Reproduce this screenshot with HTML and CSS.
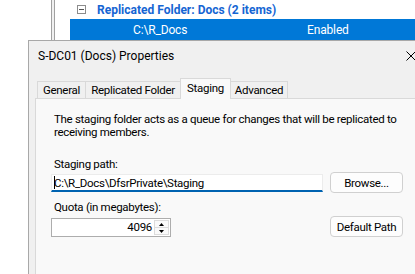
FILE: index.html
```html
<!DOCTYPE html>
<html>
<head>
<meta charset="utf-8">
<link rel="stylesheet" href="styles.css">
</head>
<body>
<div class="app">
  <div class="tree"></div>
  <div class="splitter"></div>
  <div class="list">
    <div class="group-head">
      <span class="minus-box"><span class="minus"></span></span>
      <span class="group-title">Replicated Folder: Docs (2 items)</span>
    </div>
    <div class="row selected">
      <span class="cell path">C:\R_Docs</span>
      <span class="cell state">Enabled</span>
    </div>
  </div>
</div>

<div class="dialog">
  <div class="titlebar">
    <span class="title">S-DC01 (Docs) Properties</span>
    <span class="close">
      <svg width="10" height="10" viewBox="0 0 10 10"><path d="M0.5 0.5 L9.5 9.5 M9.5 0.5 L0.5 9.5" stroke="#000" stroke-width="1" fill="none"/></svg>
    </span>
  </div>
  <div class="client">
    <div class="tabs">
      <div class="tab tab-general">General</div>
      <div class="tab tab-replicated">Replicated Folder</div>
      <div class="tab tab-staging active">Staging</div>
      <div class="tab tab-advanced">Advanced</div>
    </div>
    <div class="page">
      <p class="desc">The staging folder acts as a queue for changes that will be replicated to<br>receiving members.</p>
      <div class="label label-path">Staging path:</div>
      <div class="form-row row-path">
        <div class="textbox"><span class="caret"></span>C:\R_Docs\DfsrPrivate\Staging</div>
        <div class="btn">Browse...</div>
      </div>
      <div class="label label-quota">Quota (in megabytes):</div>
      <div class="form-row row-quota">
        <div class="numbox">
          <span class="num">4096</span>
          <span class="spin">
            <span class="spin-btn"><svg width="5" height="3" viewBox="0 0 5 3"><path d="M2.5 0 L5 3 L0 3 Z" fill="#000"/></svg></span>
            <span class="spin-btn"><svg width="5" height="3" viewBox="0 0 5 3"><path d="M0 0 L5 0 L2.5 3 Z" fill="#000"/></svg></span>
          </span>
        </div>
        <div class="btn">Default Path</div>
      </div>
    </div>
  </div>
</div>
</body>
</html>
```

FILE: styles.css
```css
* { box-sizing: border-box; }
html, body {
  margin: 0;
  padding: 0;
}
body {
  width: 415px;
  height: 274px;
  overflow: hidden;
  position: relative;
  background: #ffffff;
  font-family: Roboto, "Liberation Sans", Arial, sans-serif;
  font-size: 11.5px;
  letter-spacing: -0.3px;
  color: #000;
}

/* background MMC window */
.app {
  display: flex;
  height: 274px;
}
.tree {
  width: 51px;
  background: #ffffff;
}
.splitter {
  width: 4px;
  background: #f0f0f0;
  border-left: 1px solid #a0a0a0;
  border-right: 1px solid #a0a0a0;
}
.list {
  flex: 1;
  background: #ffffff;
  display: flex;
  flex-direction: column;
}
.group-head {
  height: 19px;
  display: flex;
  align-items: center;
  padding-left: 22px;
}
.minus-box {
  width: 9px;
  height: 9px;
  border: 1px solid #8c8c8c;
  display: flex;
  align-items: center;
  justify-content: center;
  margin-right: 11px;
}
.minus {
  width: 5px;
  height: 1px;
  background: #555;
}
.group-title {
  font-weight: bold;
  color: #1565d3;
  font-size: 12px;
  letter-spacing: 0;
}
.row {
  margin-left: 15px;
  height: 21px;
  display: flex;
  align-items: center;
}
.row.selected {
  background: #0078d7;
  color: #ffffff;
  font-size: 12px;
  letter-spacing: -0.15px;
}
.cell.path {
  padding-left: 63px;
  width: 237px;
}

/* dialog window */
.dialog {
  position: absolute;
  left: 28px;
  top: 40px;
  width: 407px;
  height: 250px;
  background: #f0f0f0;
  border: 1px solid #a8a8a8;
  display: flex;
  flex-direction: column;
}
.titlebar {
  height: 30px;
  display: flex;
  align-items: center;
  justify-content: space-between;
  padding-left: 9px;
}
.title {
  font-size: 12px;
  letter-spacing: 0;
}
.close {
  width: 46px;
  height: 30px;
  display: flex;
  align-items: center;
  justify-content: center;
}
.close svg { display: block; }

.client {
  padding: 7px 6px 0 6px;
  flex: 1;
  display: flex;
  flex-direction: column;
}
.tabs {
  display: flex;
  align-items: flex-end;
  height: 20px;
  padding-left: 2px;
  position: relative;
  z-index: 1;
}
.tab {
  height: 17px;
  border: 1px solid #d9d9d9;
  border-bottom: none;
  background: #f0f0f0;
  display: flex;
  align-items: center;
  justify-content: center;
  margin-left: -1px;
  white-space: nowrap;
}
.tab:first-child { margin-left: 0; }
.tab-general { width: 49px; }
.tab-replicated { width: 96px; }
.tab-staging { width: 51px; }
.tab-advanced { width: 58px; }
.tab.active {
  height: 21px;
  margin-bottom: -1px;
  background: #f9f9f9;
  position: relative;
  z-index: 2;
  padding-bottom: 3px;
}

.page {
  flex: 1;
  background: #f9f9f9;
  border: 1px solid #d9d9d9;
  border-right: none;
  border-bottom: none;
  padding: 14px 0 0 15px;
}
.desc {
  margin: 0;
  padding-left: 3px;
  line-height: 13px;
  white-space: nowrap;
}
.label {
  padding-left: 3px;
  line-height: 13px;
  white-space: nowrap;
}
.label-path { margin-top: 19px; }
.label-quota { margin-top: 8px; }

.form-row {
  display: grid;
  grid-template-columns: 272px 73px;
  column-gap: 7px;
  height: 21px;
}
.row-path { margin-top: 1px; }
.row-quota { margin-top: 2px; }

.textbox {
  align-self: start;
  margin-top: 2px;
  height: 18px;
  background: #ffffff;
  border: 1px solid #ececec;
  border-bottom: 2px solid #0063b1;
  padding-left: 2px;
  display: flex;
  align-items: center;
  white-space: nowrap;
}
.caret {
  display: inline-block;
  width: 1px;
  height: 13px;
  background: #000;
  margin-right: -1px;
}

.numbox {
  width: 120px;
  height: 19px;
  align-self: end;
  background: #ffffff;
  border: 1px solid #adadad;
  display: flex;
}
.num {
  flex: 1;
  text-align: right;
  padding-right: 2px;
  line-height: 17px;
}
.spin {
  width: 16px;
  display: flex;
  flex-direction: column;
  padding: 1px 1px 1px 0;
}
.spin-btn {
  flex: 1;
  display: flex;
  align-items: center;
  justify-content: center;
  border: 1px solid #dcdcdc;
  background: #fafafa;
}
.spin-btn + .spin-btn { border-top: none; }
.spin-btn svg { display: block; }

.btn {
  height: 21px;
  border: 1px solid #d0d0d0;
  border-radius: 4px;
  background: #fdfdfd;
  display: flex;
  align-items: center;
  justify-content: center;
  white-space: nowrap;
}
```
